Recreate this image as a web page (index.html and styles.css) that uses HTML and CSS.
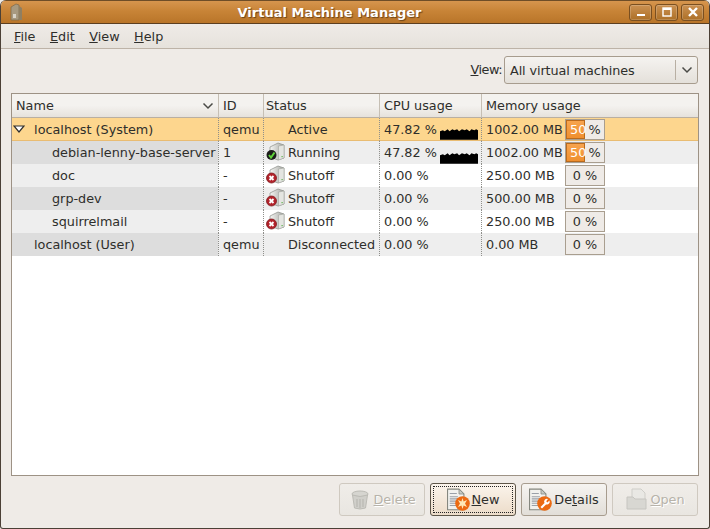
FILE: index.html
```html
<!DOCTYPE html>
<html lang="en">
<head>
    <meta charset="UTF-8">
    <link rel="stylesheet" href="styles.css">
    <title>Virtual Machine Manager</title>
</head>
<body>
    <svg class="defs" width="0" height="0">
        <defs>
            <linearGradient id="server-side" x1="0" y1="0" x2="1" y2="0">
                <stop offset="0" stop-color="#f6f6f4"/>
                <stop offset="1" stop-color="#a3a5a0"/>
            </linearGradient>
            <symbol id="server" viewBox="0 0 22 22">
                <path d="M4 5 L12 1 L18 3 V16 L12 18 L4 15 Z" fill="url(#server-side)" stroke="#8a8c87" stroke-width="0.7"/>
                <path d="M12.5 4 L18 3 V16 L12.5 18 Z" fill="#e4e5e1" stroke="#9a9c97" stroke-width="0.5"/>
                <rect x="15.5" y="14" width="1.2" height="1.2" fill="#5bb04a"/>
            </symbol>
            <symbol id="doc" viewBox="0 0 22 22">
                <path d="M0.5 1 H11 L15.5 5.5 V20 H0.5 Z" fill="#f1f1ee" stroke="#85877f"/>
                <path d="M11 1 V5.5 H15.5 Z" fill="#c9cbc5" stroke="#85877f" stroke-width="0.7"/>
                <path d="M2.5 5 H9 M2.5 8 H10 M2.5 10 H13 M2.5 12 H13 M2.5 14 H13 M2.5 16 H9" stroke="#9aa0a8"/>
            </symbol>
        </defs>
    </svg>

    <div class="window">
        <div class="titlebar">
            <svg class="app-icon" width="14" height="18" viewBox="0 0 14 18">
                <path d="M1 4 L6 1 L9 2 L9 17 L1 17 Z" fill="#a89a80" stroke="#7c6a4c" stroke-width="0.7"/>
                <path d="M9 3 L12 5 L12 17 L9 17 Z" fill="#8f7f62"/>
                <rect x="3" y="11" width="3" height="4" fill="#d9d4c8"/>
            </svg>
            <div class="title">Virtual Machine Manager</div>
            <div class="win-buttons">
                <div class="win-btn">
                    <svg width="12" height="12" viewBox="0 0 12 12"><rect x="2" y="8" width="8" height="2" fill="#fff"/></svg>
                </div>
                <div class="win-btn">
                    <svg width="12" height="12" viewBox="0 0 12 12"><rect x="2" y="2" width="8" height="8" fill="none" stroke="#fff" stroke-width="1.4"/><rect x="2" y="2" width="8" height="2" fill="#fff"/></svg>
                </div>
                <div class="win-btn">
                    <svg width="12" height="12" viewBox="0 0 12 12"><path d="M2 2 L10 10 M10 2 L2 10" stroke="#fff" stroke-width="2.4"/></svg>
                </div>
            </div>
        </div>

        <div class="menubar">
            <span class="menu-item"><u>F</u>ile</span>
            <span class="menu-item"><u>E</u>dit</span>
            <span class="menu-item"><u>V</u>iew</span>
            <span class="menu-item"><u>H</u>elp</span>
        </div>

        <div class="content">
            <div class="view-row">
                <label class="view-label"><u>V</u>iew:</label>
                <div class="combo">
                    <span class="combo-text">All virtual machines</span>
                    <span class="combo-arrow">
                        <svg width="12" height="8" viewBox="0 0 12 8"><path d="M1.5 1.5 L6 6 L10.5 1.5" fill="none" stroke="#4a4a46" stroke-width="1.5"/></svg>
                    </span>
                </div>
            </div>

            <div class="list">
                <table>
                    <colgroup>
                        <col class="col-name">
                        <col class="col-id">
                        <col class="col-status">
                        <col class="col-cpu">
                        <col>
                    </colgroup>
                    <thead>
                        <tr>
                            <th class="name-head">
                                Name
                                <svg width="12" height="8" viewBox="0 0 12 8"><path d="M1.5 1.5 L6 6 L10.5 1.5" fill="none" stroke="#4a4a46" stroke-width="1.5"/></svg>
                            </th>
                            <th>ID</th>
                            <th class="status">Status</th>
                            <th>CPU usage</th>
                            <th>Memory usage</th>
                        </tr>
                    </thead>
                    <tbody>
                        <tr class="selected">
                            <td class="name">
                                <svg class="expander" width="12" height="8" viewBox="0 0 12 8"><path d="M1 1 H11 L6 7 Z" fill="#fff" stroke="#2e2e2e" stroke-width="1.2"/></svg>
                                <span class="host">localhost (System)</span>
                            </td>
                            <td>qemu</td>
                            <td class="status"><span class="no-icon"></span>Active</td>
                            <td><div class="cpu"><span>47.82 %</span><svg class="spark" width="40" height="12" viewBox="0 0 40 12"><path d="M0 3 L3 2 L5 3 L8 1 L10 3 L13 1 L15 2 L18 1 L20 3 L23 1 L26 2 L28 1 L31 3 L33 1 L36 2 L38 1 L40 2 V12 H0 Z" fill="#000"/></svg></div></td>
                            <td><div class="mem"><span class="mem-text">1002.00 MB</span><div class="bar"><span class="bar-fill" style="width: 50%">50</span><span class="bar-rest">%</span></div></div></td>
                        </tr>
                        <tr class="alt">
                            <td class="name"><span class="vm">debian-lenny-base-server</span></td>
                            <td>1</td>
                            <td class="status">
                                <svg class="vm-icon" width="22" height="22" viewBox="0 0 22 22"><use href="#server"/><circle cx="5.5" cy="13" r="5" fill="#1c1c1a"/><path d="M3 13 L5 15.5 L8.5 10.5" fill="none" stroke="#5fd23a" stroke-width="2"/></svg>Running
                            </td>
                            <td><div class="cpu"><span>47.82 %</span><svg class="spark low" width="40" height="12" viewBox="0 0 40 12"><path d="M0 3 L3 2 L5 3 L8 1 L10 3 L13 1 L15 2 L18 1 L20 3 L23 1 L26 2 L28 1 L31 3 L33 1 L36 2 L38 1 L40 2 V12 H0 Z" fill="#000"/></svg></div></td>
                            <td><div class="mem"><span class="mem-text">1002.00 MB</span><div class="bar"><span class="bar-fill" style="width: 50%">50</span><span class="bar-rest">%</span></div></div></td>
                        </tr>
                        <tr>
                            <td class="name"><span class="vm">doc</span></td>
                            <td>-</td>
                            <td class="status">
                                <svg class="vm-icon" width="22" height="22" viewBox="0 0 22 22"><use href="#server"/><circle cx="5.5" cy="13" r="5" fill="#b3222a" stroke="#7c1a1e" stroke-width="0.8"/><path d="M3.5 11 L7.5 15 M7.5 11 L3.5 15" stroke="#fff" stroke-width="1.8"/></svg>Shutoff
                            </td>
                            <td>0.00 %</td>
                            <td><div class="mem"><span class="mem-text">250.00 MB</span><div class="bar">0 %</div></div></td>
                        </tr>
                        <tr class="alt">
                            <td class="name"><span class="vm">grp-dev</span></td>
                            <td>-</td>
                            <td class="status">
                                <svg class="vm-icon" width="22" height="22" viewBox="0 0 22 22"><use href="#server"/><circle cx="5.5" cy="13" r="5" fill="#b3222a" stroke="#7c1a1e" stroke-width="0.8"/><path d="M3.5 11 L7.5 15 M7.5 11 L3.5 15" stroke="#fff" stroke-width="1.8"/></svg>Shutoff
                            </td>
                            <td>0.00 %</td>
                            <td><div class="mem"><span class="mem-text">500.00 MB</span><div class="bar">0 %</div></div></td>
                        </tr>
                        <tr>
                            <td class="name"><span class="vm">squirrelmail</span></td>
                            <td>-</td>
                            <td class="status">
                                <svg class="vm-icon" width="22" height="22" viewBox="0 0 22 22"><use href="#server"/><circle cx="5.5" cy="13" r="5" fill="#b3222a" stroke="#7c1a1e" stroke-width="0.8"/><path d="M3.5 11 L7.5 15 M7.5 11 L3.5 15" stroke="#fff" stroke-width="1.8"/></svg>Shutoff
                            </td>
                            <td>0.00 %</td>
                            <td><div class="mem"><span class="mem-text">250.00 MB</span><div class="bar">0 %</div></div></td>
                        </tr>
                        <tr class="alt">
                            <td class="name"><span class="host">localhost (User)</span></td>
                            <td>qemu</td>
                            <td class="status"><span class="no-icon"></span>Disconnected</td>
                            <td>0.00 %</td>
                            <td><div class="mem"><span class="mem-text">0.00 MB</span><div class="bar">0 %</div></div></td>
                        </tr>
                    </tbody>
                </table>
            </div>

            <div class="button-row">
                <button class="btn" disabled>
                    <svg width="24" height="24" viewBox="0 0 24 24">
                        <ellipse cx="12" cy="6" rx="8" ry="3" fill="#d6d5d0" stroke="#bcbbb5"/>
                        <path d="M4.5 7 L6.5 20 Q12 22 17.5 20 L19.5 7 Q12 10 4.5 7 Z" fill="#d0cfca" stroke="#bcbbb5"/>
                        <path d="M9 11 V19 M12 11 V20 M15 11 V19" stroke="#b4b3ad"/>
                    </svg>
                    <span><u>D</u>elete</span>
                </button>
                <button class="btn focused">
                    <svg width="24" height="24" viewBox="0 0 24 24">
                        <use href="#doc"/>
                        <circle cx="15.5" cy="15.5" r="7.3" fill="#ec6a12"/>
                        <path d="M15.5 10 L16.6 13.6 L20 12 L18 15.5 L20 19 L16.6 17.4 L15.5 21 L14.4 17.4 L11 19 L13 15.5 L11 12 L14.4 13.6 Z" fill="#ffe9b8"/>
                    </svg>
                    <span><u>N</u>ew</span>
                </button>
                <button class="btn">
                    <svg width="24" height="24" viewBox="0 0 24 24">
                        <use href="#doc"/>
                        <circle cx="15.5" cy="15.5" r="7.3" fill="#ec6a12"/>
                        <path d="M11.5 19 L15.5 15 A2.8 2.8 0 0 1 19 11 L17.2 13.2 L18.4 14.4 L20.4 12.4 A2.8 2.8 0 0 1 17 16.4 L13 20.4 Z" fill="#fff"/>
                    </svg>
                    <span>De<u>t</u>ails</span>
                </button>
                <button class="btn" disabled>
                    <svg width="24" height="24" viewBox="0 0 24 24">
                        <path d="M7 1 H16 L20 5 V14 H7 Z" fill="#e9e8e4" stroke="#cfcec9"/>
                        <path d="M2 9 H8 L10 11 H21 V21 H2 Z" fill="#d8d7d2" stroke="#c6c5c0"/>
                    </svg>
                    <span><u>O</u>pen</span>
                </button>
            </div>
        </div>
    </div>
</body>
</html>
```

FILE: styles.css
```css
html, body {
    margin: 0;
    height: 100%;
}

body {
    font-family: "DejaVu Sans", sans-serif;
    font-size: 12.8px;
    color: #2e2e2b;
    background-color: #efebe7;
    overflow: hidden;
}

.defs {
    display: block;
}

.window {
    height: 529px;
    display: flex;
    flex-direction: column;
    box-sizing: border-box;
    border-left: 1px solid #4b4036;
    border-right: 1px solid #4b4036;
    border-bottom: 1px solid #4b4036;
    border-radius: 6px 6px 3px 3px;
    overflow: hidden;
}

.titlebar {
    height: 24px;
    flex: none;
    display: flex;
    align-items: center;
    padding: 0 5px 0 9px;
    box-sizing: border-box;
    background: linear-gradient(#d6954e, #c88437 45%, #b97529);
    border-top: 1px solid #6e4d27;
    border-bottom: 1px solid #5c3f20;
}

.app-icon {
    flex: none;
}

.title {
    flex: 1;
    text-align: center;
    font-size: 13px;
    font-weight: bold;
    color: #fff;
    text-shadow: 1px 1px 1px #6b4318;
    padding-left: 6px;
}

.win-buttons {
    display: flex;
    gap: 3px;
}

.win-btn {
    width: 23px;
    height: 17px;
    box-sizing: border-box;
    display: flex;
    align-items: center;
    justify-content: center;
    border: 1px solid #7a4f20;
    border-radius: 3px;
    background: linear-gradient(#cb9152, #ad7027);
    box-shadow: inset 0 0 0 1px rgba(255, 255, 255, 0.18);
}

.menubar {
    height: 25px;
    flex: none;
    display: flex;
    align-items: center;
    gap: 14.5px;
    padding-left: 13px;
    box-sizing: border-box;
    background: linear-gradient(#efebe7, #e6e2dc);
    border-bottom: 1px solid #bdb3a7;
}

.content {
    flex: 1;
    display: flex;
    flex-direction: column;
    padding: 0 10px 11px 10px;
    min-height: 0;
}

.view-row {
    height: 44px;
    flex: none;
    display: flex;
    align-items: flex-start;
    justify-content: flex-end;
    gap: 2px;
    padding: 7px 1px 0 0;
    box-sizing: border-box;
}

.view-label {
    line-height: 28px;
    letter-spacing: -0.5px;
}

.combo {
    width: 194px;
    height: 28px;
    box-sizing: border-box;
    display: flex;
    align-items: center;
    justify-content: space-between;
    padding-left: 5px;
    border: 1px solid #a79c8e;
    border-radius: 3px;
    background: linear-gradient(#f5f3f0, #e4e0da);
}

.combo-text {
    letter-spacing: -0.1px;
}

.combo-arrow {
    height: 20px;
    width: 21px;
    display: flex;
    align-items: center;
    justify-content: center;
    border-left: 1px solid #b8afa3;
}

.list {
    flex: 1;
    min-height: 0;
    background-color: #fff;
    border: 1px solid #9d9285;
}

table {
    width: 100%;
    table-layout: fixed;
    border-collapse: separate;
    border-spacing: 0;
}

.col-name { width: 206px; }
.col-id { width: 45px; }
.col-status { width: 116px; }
.col-cpu { width: 102px; }

th {
    height: 24px;
    box-sizing: border-box;
    padding: 0 4px;
    font-weight: normal;
    text-align: left;
    background: linear-gradient(#f4f2ef 50%, #e6e2dc);
    border-bottom: 1px solid #b9afa2;
    border-left: 1px solid #c6bfb4;
}

th:first-child {
    border-left: none;
}

.name-head svg {
    float: right;
    margin: 4px 0 0;
}

td {
    height: 23px;
    box-sizing: border-box;
    padding: 0 3px 0 4px;
    white-space: nowrap;
    border-left: 1px dotted #8f8f8b;
}

td:first-child {
    border-left: none;
}

tr.alt td {
    background-color: #eeeeee;
}

td.name {
    background-color: #eeeeee;
}

tr.alt td.name {
    background-color: #dddddd;
}

tr.selected td {
    background-color: #fdd68e;
    border-bottom: 1px solid #e9bc72;
}

.expander {
    margin: 0 4px 0 -3px;
    vertical-align: 1px;
}

.host {
    padding-left: 1px;
}

tr:not(.selected) .host {
    padding-left: 18px;
}

.vm {
    padding-left: 36px;
}

th.status,
td.status {
    padding-left: 2px;
    padding-right: 0;
}

.no-icon,
.vm-icon {
    display: inline-block;
    width: 22px;
}

.vm-icon {
    height: 22px;
    vertical-align: -7px;
}

.cpu {
    display: flex;
    align-items: center;
    gap: 3px;
}

.spark {
    margin-top: 9px;
}

.spark.low {
    margin-top: 10px;
}

.mem {
    display: flex;
    align-items: center;
}

.mem-text {
    width: 79px;
    flex: none;
}

.bar {
    width: 40px;
    height: 21px;
    flex: none;
    box-sizing: border-box;
    display: flex;
    align-items: center;
    justify-content: center;
    background-color: #efebe7;
    border: 1px solid #a99e8f;
}

.bar-fill {
    height: 100%;
    box-sizing: border-box;
    padding-left: 3px;
    color: #fff;
    line-height: 17px;
    background: linear-gradient(#f7a44e, #ef8f2f);
    border: 1px solid #b96a1d;
    flex: none;
}

.bar-rest {
    flex: 1;
    text-align: center;
}

.button-row {
    height: 41px;
    flex: none;
    display: flex;
    align-items: flex-end;
    justify-content: flex-end;
    gap: 5px;
    padding: 0 1px 1px 0;
    box-sizing: border-box;
}

.btn {
    width: 86px;
    height: 33px;
    display: flex;
    align-items: center;
    justify-content: center;
    gap: 1px;
    padding: 0;
    font-family: inherit;
    font-size: 12.8px;
    color: #2e2e2b;
    background: linear-gradient(#f6f4f1, #e2ded8);
    border: 1px solid #a79c8e;
    border-radius: 3px;
}

.btn:disabled {
    color: #b7b3aa;
    background: linear-gradient(#f0ede9, #e9e6e1);
    border-color: #cfc9c0;
    text-shadow: 1px 1px 0 #fff;
}

.focused {
    background: linear-gradient(#fbf4ec, #ecdcc9);
    border-color: #5d5548;
    outline: 1px dotted #222;
    outline-offset: -4px;
}
```
